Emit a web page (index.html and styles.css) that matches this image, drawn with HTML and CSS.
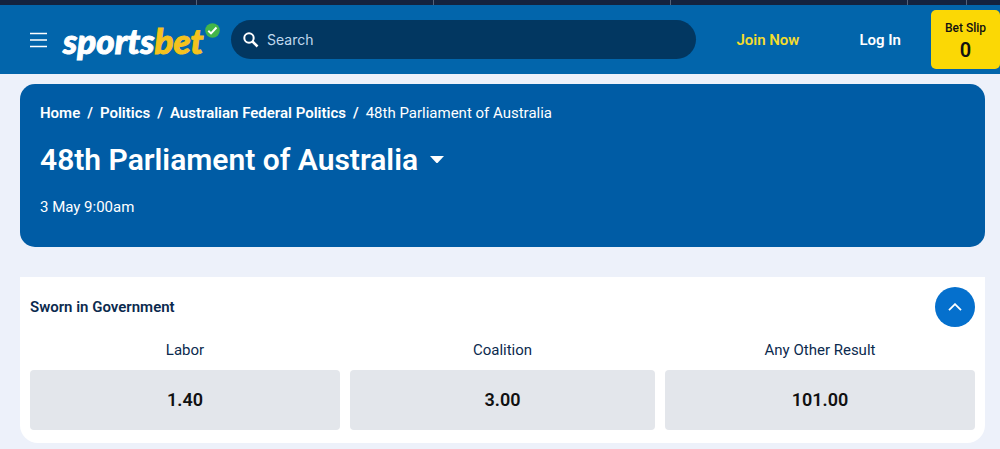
FILE: index.html
```html
<!DOCTYPE html>
<html lang="en">
<head>
<meta charset="utf-8">
<meta name="viewport" content="width=device-width, initial-scale=1">
<title>48th Parliament of Australia</title>
<link rel="stylesheet" href="styles.css">
</head>
<body>
<div class="strip"><span></span><span></span><span></span><span></span><span></span><span></span></div>
<header class="header">
  <button class="menu" type="button" aria-label="Menu">
    <svg width="18" height="16" viewBox="0 0 18 16" stroke="#fff" stroke-width="1.700"><path d="M1 1.500h17M1 8h17M1 14.500h17"/></svg>
  </button>
  <a class="logo" href="#"><span>sports</span><span class="logo-bet">bet</span>
    <svg class="logo-tick" width="15" height="15" viewBox="0 0 15 15"><circle cx="7.500" cy="7.500" r="7.300" fill="#43b549"/><path d="M3.300 7.800l2.700 2.600 5.500-5.900" fill="none" stroke="#fff" stroke-width="2"/></svg>
  </a>
  <label class="search">
    <svg width="16" height="16" viewBox="0 0 16 16" fill="none" stroke="#fff"><circle cx="6" cy="6" r="4.700" stroke-width="2"/><path d="M9.500 9.500l5 5" stroke-width="2.600"/></svg>
    <input type="search" placeholder="Search" aria-label="Search">
  </label>
  <nav class="account">
    <a class="join" href="#">Join Now</a>
    <a class="login" href="#">Log In</a>
  </nav>
  <button class="betslip" type="button"><span>Bet Slip</span><strong>0</strong></button>
</header>
<main class="main">
  <section class="hero">
    <nav class="crumbs" aria-label="Breadcrumb">
      <a href="#">Home</a><b>/</b><a href="#">Politics</a><b>/</b><a href="#">Australian Federal Politics</a><b>/</b><span>48th Parliament of Australia</span>
    </nav>
    <h1 class="title">48th Parliament of Australia
      <button class="switch" type="button" aria-label="Choose another event"><svg width="14" height="7" viewBox="0 0 14 7"><path d="M0 0h14L8 6.500q-1 1-2 0z" fill="#fff"/></svg></button>
    </h1>
    <p class="date">3 May 9:00am</p>
  </section>
  <section class="market">
    <div class="market-head">
      <h2>Sworn in Government</h2>
      <button class="collapse" type="button" aria-label="Collapse"><svg width="14" height="8" viewBox="0 0 14 8" fill="none" stroke="#fff" stroke-width="1.800"><path d="M1 7.200l6-6 6 6"/></svg></button>
    </div>
    <div class="odds">
      <div class="pick"><span id="labor">Labor</span><button type="button" aria-describedby="labor">1.40</button></div>
      <div class="pick"><span id="coalition">Coalition</span><button type="button" aria-describedby="coalition">3.00</button></div>
      <div class="pick"><span id="other">Any Other Result</span><button type="button" aria-describedby="other">101.00</button></div>
    </div>
  </section>
</main>
</body>
</html>
```
FILE: styles.css
```css
* { box-sizing: border-box; }
body {
  margin: 0;
  background: #edf1fa;
  color: #0b2a4e;
  font: 15px/20px Roboto, "Liberation Sans", sans-serif;
}
button { margin: 0; padding: 0; border: 0; background: none; color: inherit; font: inherit; cursor: pointer; }
a { color: inherit; text-decoration: none; }
svg { display: block; }
h1, h2, p { margin: 0; }

.strip {
  display: grid;
  grid-template-columns: 197fr 237fr 237fr 237fr 59fr 33fr;
  height: 5px;
  background: #14233f;
}
.strip span { border-right: 1px solid #54627a; }
.strip span:last-child { border: 0; }

.header {
  display: flex;
  align-items: center;
  height: 69px;
  padding-left: 29px;
  background: #0265ab;
  color: #fff;
}
.menu { flex: none; }
.logo {
  position: relative;
  flex: none;
  width: 158px;
  margin: 0 10px 0 16px;
  font: italic 900 35px/38px Lato, sans-serif;
  -webkit-text-stroke: 1px currentColor;
  white-space: nowrap;
}
.logo-bet { color: #f5c21d; }
.logo-tick { position: absolute; top: 2px; right: 1px; }
.search {
  display: flex;
  align-items: center;
  gap: 8px;
  flex: 1;
  height: 39px;
  padding: 0 12px;
  border-radius: 20px;
  background: #023761;
}
.search svg { flex: none; }
.search input {
  flex: 1;
  min-width: 0;
  padding: 0;
  border: 0;
  outline: 0;
  background: none;
  color: #fff;
  font: 14px/20px Inter, sans-serif;
}
.search input::placeholder { color: #c0d9ee; opacity: 1; }
.account {
  display: flex;
  gap: 60px;
  padding: 0 30px 0 40px;
  font-weight: 600;
}
.join { color: #f4dc2d; }
.betslip {
  display: flex;
  flex-direction: column;
  align-items: center;
  justify-content: center;
  width: 69px;
  height: 59px;
  border-radius: 5px;
  background: #fbd805;
  color: #111;
  font-size: 12px;
  font-weight: 500;
}
.betslip strong { font-size: 20px; font-weight: 600; line-height: 24px; }

.main { padding: 10px 15px 6px 20px; }
.hero {
  height: 163px;
  padding: 19px 20px;
  border-radius: 15px;
  background: #005ca5;
  color: #fff;
}
.crumbs { display: flex; gap: 7px; white-space: nowrap; }
.crumbs a, .crumbs b { font-weight: 600; }
.title {
  display: flex;
  align-items: center;
  gap: 12px;
  margin: 18px 0 19px;
  font-size: 30px;
  font-weight: 600;
  line-height: 37px;
}
.market {
  margin-top: 30px;
  padding: 10px 10px 13px;
  border-radius: 0 0 18px 18px;
  background: #fff;
}
.market-head { display: flex; align-items: center; justify-content: space-between; }
.market-head h2 { font-size: 15px; font-weight: 600; line-height: 20px; }
.collapse {
  display: grid;
  place-items: center;
  width: 40px;
  height: 40px;
  border-radius: 50%;
  background: #0570cd;
}
.odds {
  display: grid;
  grid-template-columns: 62fr 61fr 62fr;
  gap: 10px;
  margin-top: 13px;
}
.pick { display: flex; flex-direction: column; gap: 10px; text-align: center; }
.pick button {
  height: 60px;
  border-radius: 4px;
  background: #e3e6eb;
  color: #111;
  font-size: 18px;
  font-weight: 600;
}
```
